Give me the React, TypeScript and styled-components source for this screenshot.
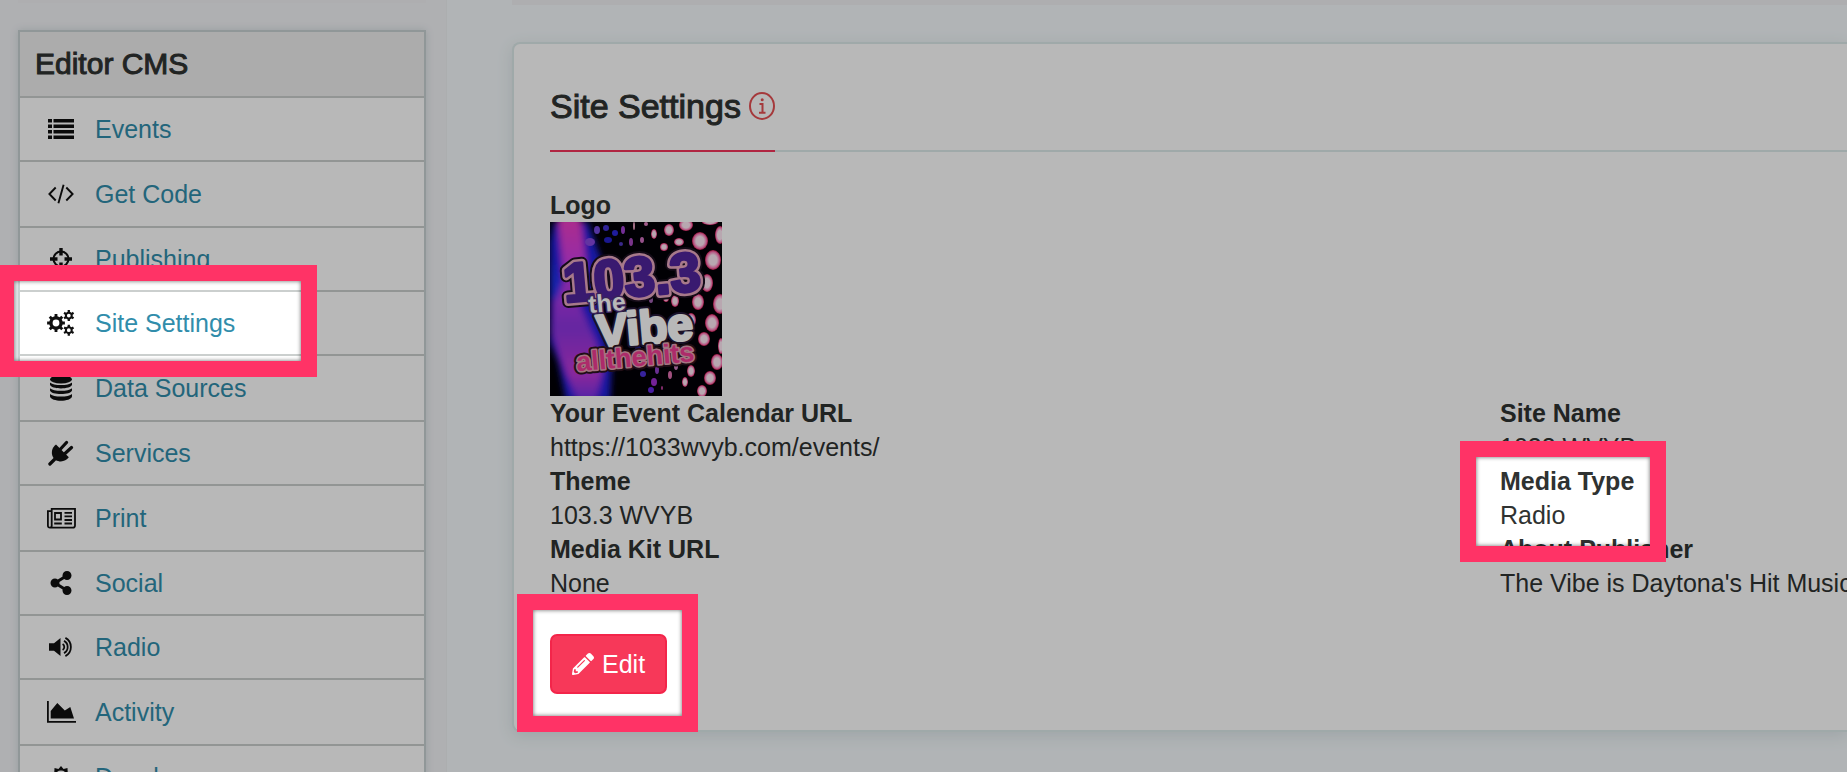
import React from "react";
import styled, { createGlobalStyle } from "styled-components";
import { FaShareAlt, FaPencilAlt } from "react-icons/fa";

const Global = createGlobalStyle`
  * { box-sizing: border-box; }
  html, body { margin: 0; height: 100%; overflow: hidden; }
  body { font: 25px/34px "Liberation Sans", Arial, sans-serif; color: #2f3231; background: #f5fafc; }
`;

const Page = styled.div`
  position: relative;
  display: flex;
  height: 100vh;
  overflow: hidden;
`;

const Sidebar = styled.aside`
  flex: none;
  width: 447px;
  padding: 0 20px 0 18px;
  background: #f3f4f7;
  border-right: 1px solid #eff1f3;
`;

const NavCard = styled.nav`
  margin-top: 27px;
  border: 2px solid #c8d2d3;
  box-shadow: 0 0 8px #d0dadd;
  background: #ffffff;
`;

const NavTitle = styled.h2`
  margin: 0;
  padding: 15px;
  font-size: 30px;
  line-height: 34px;
  font-weight: 500;
  -webkit-text-stroke: 1px currentColor;
  background: #efefef;
`;

const NavList = styled.ul`
  margin: 0;
  padding: 0;
  list-style: none;
`;

const NavItem = styled.li`
  display: grid;
  height: 64px;
  border-top: 2px solid #cbcfce;

  &:nth-child(5n),
  &:nth-child(5n + 2) {
    height: 66px;
  }
`;

const NavLink = styled.a`
  display: grid;
  grid-template-columns: 42px 1fr;
  column-gap: 13px;
  align-items: center;
  padding-left: 20px;
  color: #318dab;
  text-decoration: none;
`;

const NavIcon = styled.span`
  display: flex;
  justify-content: center;
  color: #101010;
`;

const Main = styled.main`
  flex: 1;
  min-width: 0;
  padding-left: 65px;
`;

const CardEdge = styled.div<{ $height: number }>`
  height: ${(p) => p.$height}px;
  background: #f1f2f4;
`;

const Panel = styled.section`
  margin-top: 37px;
  padding: 38px 0 36px 36px;
  border: 2px solid #ddeaea;
  border-right: 0;
  border-radius: 8px 0 0 8px;
  background: #ffffff;
  box-shadow: 0 4px 16px #dbe4e8;
`;

const PanelHeader = styled.header`
  display: flex;
  border-bottom: 2px solid #ddeaea;
`;

const PanelTitle = styled.h1`
  display: flex;
  align-items: center;
  gap: 8px;
  margin: 0 0 -2px;
  padding-bottom: 20px;
  border-bottom: 2px solid #f4345a;
  font-size: 34px;
  line-height: 48px;
  font-weight: 500;
`;

const TitleText = styled.span`
  -webkit-text-stroke: 1px currentColor;
`;

const Fields = styled.div`
  display: grid;
  grid-template-columns: 950px 1fr;
  padding-top: 36px;
`;

const FieldList = styled.dl`
  align-self: end;
  margin: 0;
  white-space: nowrap;
`;

const Term = styled.dt`
  font-weight: 700;
`;

const Detail = styled.dd`
  margin: 0;
`;

const EditButton = styled.button`
  display: flex;
  align-items: center;
  gap: 8px;
  height: 60px;
  margin-top: 34px;
  padding: 0 20px;
  border: 2px solid #f3254a;
  border-radius: 7px;
  background: #f73859;
  color: #ffffff;
  font: inherit;
`;

const Artwork = styled.svg`
  display: block;
  width: 172px;
  height: 174px;
  font-family: "Liberation Sans", Arial, sans-serif;
  font-weight: 700;
`;

const Dim = styled.div<{ $cut: string }>`
  position: absolute;
  inset: 0;
  background: rgba(0, 0, 0, 0.28);
  clip-path: path(evenodd, "${(p) => p.$cut}");
  pointer-events: none;
`;

const Callout = styled.div<{ $x: number; $y: number; $w: number; $h: number }>`
  position: absolute;
  left: ${(p) => p.$x}px;
  top: ${(p) => p.$y}px;
  width: ${(p) => p.$w}px;
  height: ${(p) => p.$h}px;
  border: 16px solid #ff3366;
  box-shadow: inset 0 0 4px rgba(0, 0, 0, 0.6);
  pointer-events: none;
`;

/* Closed outline of a gear: flat teeth alternating with the body radius. */
const gearPath = (cx: number, cy: number, outer: number, inner: number, teeth: number) => {
  const step = (Math.PI * 2) / teeth;
  const points: string[] = [];
  for (let i = 0; i < teeth; i += 1) {
    const corners: [number, number][] = [[-0.27, inner], [-0.2, outer], [0.2, outer], [0.27, inner]];
    corners.forEach(([t, r]) => {
      const a = (i + t) * step - Math.PI / 2;
      points.push(`${(cx + r * Math.cos(a)).toFixed(2)} ${(cy + r * Math.sin(a)).toFixed(2)}`);
    });
  }
  return `M${points.join("L")}z`;
};

const ringHole = (cx: number, cy: number, r: number) =>
  `M${cx - r} ${cy}a${r} ${r} 0 1 0 ${2 * r} 0a${r} ${r} 0 1 0 ${-2 * r} 0z`;

const starPath = (c: number, outer: number, inner: number, peaks: number) =>
  `M${Array.from({ length: peaks * 2 }, (_, i) => {
    const r = i % 2 ? inner : outer;
    const a = (i * Math.PI) / peaks - Math.PI / 2;
    return `${(c + r * Math.cos(a)).toFixed(2)} ${(c + r * Math.sin(a)).toFixed(2)}`;
  }).join("L")}z`;

const ListIcon = () => (
  <svg width="26" height="20" viewBox="0 0 26 20" fill="currentColor">
    <path d="M0 0h4v3.500H0zM5.500 0H26v3.500H5.500zM0 5.500h4V9H0zM5.500 5.500H26V9H5.500zM0 11h4v3.500H0zM5.500 11H26v3.500H5.500zM0 16.500h4V20H0zM5.500 16.500H26V20H5.500z" />
  </svg>
);

const CodeIcon = () => (
  <svg width="26" height="20" viewBox="0 0 26 20" fill="none" stroke="currentColor" strokeWidth="1.900">
    <path d="M7.700 3.500L1.400 10l6.300 6.500M18.300 3.500l6.300 6.500-6.300 6.500M15.600 .8l-5.200 18.400" />
  </svg>
);

const CrosshairIcon = () => (
  <svg width="22" height="22" viewBox="0 0 22 22" fill="none" stroke="currentColor">
    <circle cx="11" cy="11" r="7.500" strokeWidth="2" />
    <path d="M11 0v7.500M11 14.500V22M0 11h7.500M14.500 11H22" strokeWidth="3.400" />
  </svg>
);

const CogsIcon = () => (
  <svg width="28" height="26" viewBox="0 0 28 26" fill="currentColor" fillRule="evenodd">
    <path d={gearPath(9, 13, 9, 6.8, 8) + ringHole(9, 13, 3.4)} />
    <path d={gearPath(21.8, 5.6, 5.6, 4, 6) + ringHole(21.8, 5.6, 1.9)} />
    <path d={gearPath(21.8, 20.2, 5.6, 4, 6) + ringHole(21.8, 20.2, 1.9)} />
  </svg>
);

const DatabaseIcon = () => (
  <svg width="22" height="26" viewBox="0 0 22 26" fill="currentColor">
    <ellipse cx="11" cy="4.300" rx="11" ry="4.300" />
    <path d="M0 7.500c3 3.400 19 3.400 22 0v2.300c-1 4.800-21 4.800-22 0zM0 13.200c3 3.400 19 3.400 22 0v2.300c-1 4.800-21 4.800-22 0zM0 18.900c3 3.400 19 3.400 22 0v2.600c-1 5.600-21 5.600-22 0z" />
  </svg>
);

const PlugIcon = () => (
  <svg width="26" height="26" viewBox="0 0 26 26" fill="currentColor" stroke="currentColor" strokeLinecap="round">
    <path stroke="none" d="M8 4.500L20.800 17.300C17.800 21.600 12 22.600 7.600 19.900L5.300 17.600C2.600 13.200 3.800 7.600 8 4.500z" />
    <path fill="none" strokeWidth="3.200" d="M12.500 9l6-6.500M17 13.500l6.500-6M1.900 24l5-5" />
  </svg>
);

const NewspaperIcon = () => (
  <svg width="29" height="21" viewBox="0 0 29 21" fill="none" stroke="currentColor" strokeWidth="1.800">
    <path d="M4.700 17.500V.9H28v16.600c0 1.500-.8 2.200-2.200 2.200H3C1.600 19.700.9 19 .9 17.500V3.200h3.800v14.500c0 1.200-.7 2-1.800 2" />
    <path d="M8 5h6v6.500H8zM17.500 4.800h7.500M17.500 8.300h7.500M17.500 12h7.500M7.200 15.500h7.600M17.500 15.500h7.500" />
  </svg>
);

const VolumeIcon = () => (
  <svg width="24" height="20" viewBox="0 0 24 20" fill="none" stroke="currentColor" strokeWidth="1.800">
    <path fill="currentColor" stroke="none" d="M0 6.300h5L11.500 1v18L5 13.700H0z" />
    <path d="M13.600 7a3.500 3.500 0 0 1 0 6M15 3.900a6.900 6.900 0 0 1 0 12.200M16.400 .9a10.300 10.300 0 0 1 0 18.200" />
  </svg>
);

const ChartIcon = () => (
  <svg width="29" height="22" viewBox="0 0 29 22">
    <path d="M.9 0v20.900H29" fill="none" stroke="currentColor" strokeWidth="1.800" />
    <path d="M3.700 17.500V10L10.300 2l7.500 7.600L23.300 6 27 17.500z" fill="currentColor" />
  </svg>
);

const SunIcon = () => (
  <svg width="22" height="22" viewBox="0 0 22 22" fill="currentColor" fillRule="evenodd">
    <path d={starPath(11, 11, 8.3, 10) + ringHole(11, 11, 6.4)} />
  </svg>
);

const InfoIcon = () => (
  <svg width="26" height="28" viewBox="0 0 26 28" fill="none" stroke="#e54f53" strokeWidth="2">
    <ellipse cx="13" cy="14" rx="12" ry="13" />
    <path d="M10.500 12h3v8.500M10 20.700h6.500" />
    <circle cx="13.200" cy="7.800" r="1.500" fill="#e54f53" stroke="none" />
  </svg>
);

const navItems = [
  { label: "Events", icon: <ListIcon /> },
  { label: "Get Code", icon: <CodeIcon /> },
  { label: "Publishing", icon: <CrosshairIcon /> },
  { label: "Site Settings", icon: <CogsIcon /> },
  { label: "Data Sources", icon: <DatabaseIcon /> },
  { label: "Services", icon: <PlugIcon /> },
  { label: "Print", icon: <NewspaperIcon /> },
  { label: "Social", icon: <FaShareAlt size={24} /> },
  { label: "Radio", icon: <VolumeIcon /> },
  { label: "Activity", icon: <ChartIcon /> },
  { label: "Developer", icon: <SunIcon /> },
];

/* Stage lights: x, y, horizontal radius, vertical radius. */
const lights = [
  [136, 3, 7, 6], [160, 0, 8, 3], [119, 8, 5, 6], [104, 12, 3, 5], [150, 19, 8, 9], [170, 13, 5, 9],
  [129, 20, 5, 4], [114, 25, 4, 4], [163, 38, 8, 10], [157, 61, 6, 9], [170, 82, 7, 10], [148, 80, 6, 8],
  [125, 79, 4, 6], [162, 101, 7, 9], [141, 98, 5, 7], [136, 114, 4, 6], [154, 117, 6, 7], [171, 124, 3, 8],
  [167, 140, 6, 8], [141, 149, 4, 6], [160, 156, 6, 7], [135, 160, 3, 5], [152, 169, 5, 6], [116, 76, 3, 4],
];
const sparks = [
  [73, 8, 2, 4, "#a040d0"], [84, 4, 1, 4, "#e8a0c0"], [96, 2, 2, 2, "#e080c0"], [56, 6, 3, 3, "#4030d0"],
  [65, 11, 3, 3, "#2c28d8"], [47, 8, 3, 4, "#7448e0"], [58, 18, 4, 3, "#2420c8"], [81, 20, 2, 4, "#a848c0"],
  [71, 22, 2, 2, "#5038c0"], [92, 18, 2, 3, "#d070c0"], [40, 20, 5, 4, "#8848e0"], [93, 152, 3, 3, "#4c30d8"],
  [107, 148, 2, 4, "#9040c8"], [104, 160, 3, 4, "#a030d0"], [101, 168, 3, 3, "#6428e0"], [120, 153, 2, 4, "#e070b0"],
  [112, 166, 1, 2, "#c040a0"], [126, 144, 2, 4, "#d080c0"], [88, 126, 3, 2, "#2018a0"], [101, 78, 2, 3, "#a060b0"],
] as const;

const StationLogo = () => (
  <Artwork viewBox="0 0 172 174" role="img" aria-label="Station logo">
    <defs>
      <linearGradient id="glow" x1="0" y1="0" x2="0" y2="1">
        <stop offset="0" stopColor="#f03cc0" />
        <stop offset="0.250" stopColor="#d03ce8" />
        <stop offset="0.600" stopColor="#8c34e0" />
        <stop offset="0.850" stopColor="#c038d8" />
        <stop offset="1" stopColor="#6c30e8" />
      </linearGradient>
      <radialGradient id="light">
        <stop offset="0.500" stopColor="#ffe8f4" />
        <stop offset="0.800" stopColor="#ff7cba" />
        <stop offset="1" stopColor="#d01850" />
      </radialGradient>
      <filter id="soft" x="-20%" y="-20%" width="140%" height="140%">
        <feGaussianBlur stdDeviation="3" />
      </filter>
      <clipPath id="frame"><rect width="172" height="174" /></clipPath>
    </defs>
    <rect width="172" height="174" fill="#020006" />
    <g clipPath="url(#frame)">
      <g filter="url(#soft)">
        <path d="M4 0H38L52 40 50 100 62 140 60 178H16L8 140 0 120V20z" fill="#2424e0" />
        <path d="M8 -6H30L36 40 30 84 46 120 52 150 46 180H28L12 140 2 110 4 76 14 60z" fill="url(#glow)" />
        <path d="M0 36L12 64 6 78 0 76z" fill="#2030f0" />
      </g>
      {lights.map(([x, y, rx, ry]) => (
        <ellipse key={`${x}-${y}`} cx={x} cy={y} rx={rx} ry={ry} fill="url(#light)" />
      ))}
      {sparks.map(([x, y, rx, ry, fill]) => (
        <ellipse key={`${x}-${y}`} cx={x} cy={y} rx={rx} ry={ry} fill={fill} />
      ))}
      <g transform="rotate(-5 86 90)" strokeLinejoin="round" paintOrder="stroke">
        <text x="16" y="74" fontSize="55" fill="#50249c" stroke="#1c1020" strokeWidth="12">103.3</text>
        <text x="16" y="74" fontSize="55" fill="#50249c" stroke="#e8a8c0" strokeWidth="8">103.3</text>
        <text x="16" y="74" fontSize="55" fill="#50249c" stroke="#50249c" strokeWidth="3">103.3</text>
        <text x="45" y="122" fontSize="46" fill="#ffffff" stroke="#241838" strokeWidth="7">Vibe</text>
        <text x="45" y="122" fontSize="46" fill="#ffffff" stroke="#ffffff" strokeWidth="3">Vibe</text>
        <text x="39" y="87" fontSize="25" fill="#ffffff" stroke="#50307c" strokeWidth="3">the</text>
        <text x="22" y="144" fontSize="27" fill="#f03c94" stroke="#2c1420" strokeWidth="7">allthehits</text>
        <text x="22" y="144" fontSize="27" fill="#f03c94" stroke="#e4a4b4" strokeWidth="3">allthehits</text>
      </g>
    </g>
  </Artwork>
);

const callouts = [
  { x: -2, y: 265, w: 319, h: 112 },
  { x: 1460, y: 441, w: 206, h: 121 },
  { x: 517, y: 594, w: 181, h: 138 },
];

/* The shade covers everything except the inside of each callout. */
const cut = [
  "M0 0H9999V9999H0Z",
  ...callouts.map((c) => `M${c.x + 16} ${c.y + 16}h${c.w - 32}v${c.h - 32}h${32 - c.w}Z`),
].join("");

const App = () => (
  <Page>
    <Global />
    <Sidebar>
      <CardEdge $height={3} />
      <NavCard>
        <NavTitle>Editor CMS</NavTitle>
        <NavList>
          {navItems.map((n) => (
            <NavItem key={n.label}>
              <NavLink href="#">
                <NavIcon>{n.icon}</NavIcon>
                {n.label}
              </NavLink>
            </NavItem>
          ))}
        </NavList>
      </NavCard>
    </Sidebar>
    <Main>
      <CardEdge $height={5} />
      <Panel>
        <PanelHeader>
          <PanelTitle>
            <TitleText>Site Settings</TitleText>
            <InfoIcon />
          </PanelTitle>
        </PanelHeader>
        <Fields>
          <FieldList>
            <Term>Logo</Term>
            <Detail><StationLogo /></Detail>
            <Term>Your Event Calendar URL</Term>
            <Detail>https://1033wvyb.com/events/</Detail>
            <Term>Theme</Term>
            <Detail>103.3 WVYB</Detail>
            <Term>Media Kit URL</Term>
            <Detail>None</Detail>
          </FieldList>
          <FieldList>
            <Term>Site Name</Term>
            <Detail>1033 WVYB</Detail>
            <Term>Media Type</Term>
            <Detail>Radio</Detail>
            <Term>About Publisher</Term>
            <Detail>The Vibe is Daytona's Hit Music</Detail>
          </FieldList>
        </Fields>
        <EditButton type="button"><FaPencilAlt size={22} />Edit</EditButton>
      </Panel>
    </Main>
    <Dim $cut={cut} />
    {callouts.map((c) => (
      <Callout key={c.y} $x={c.x} $y={c.y} $w={c.w} $h={c.h} />
    ))}
  </Page>
);

export default App;
